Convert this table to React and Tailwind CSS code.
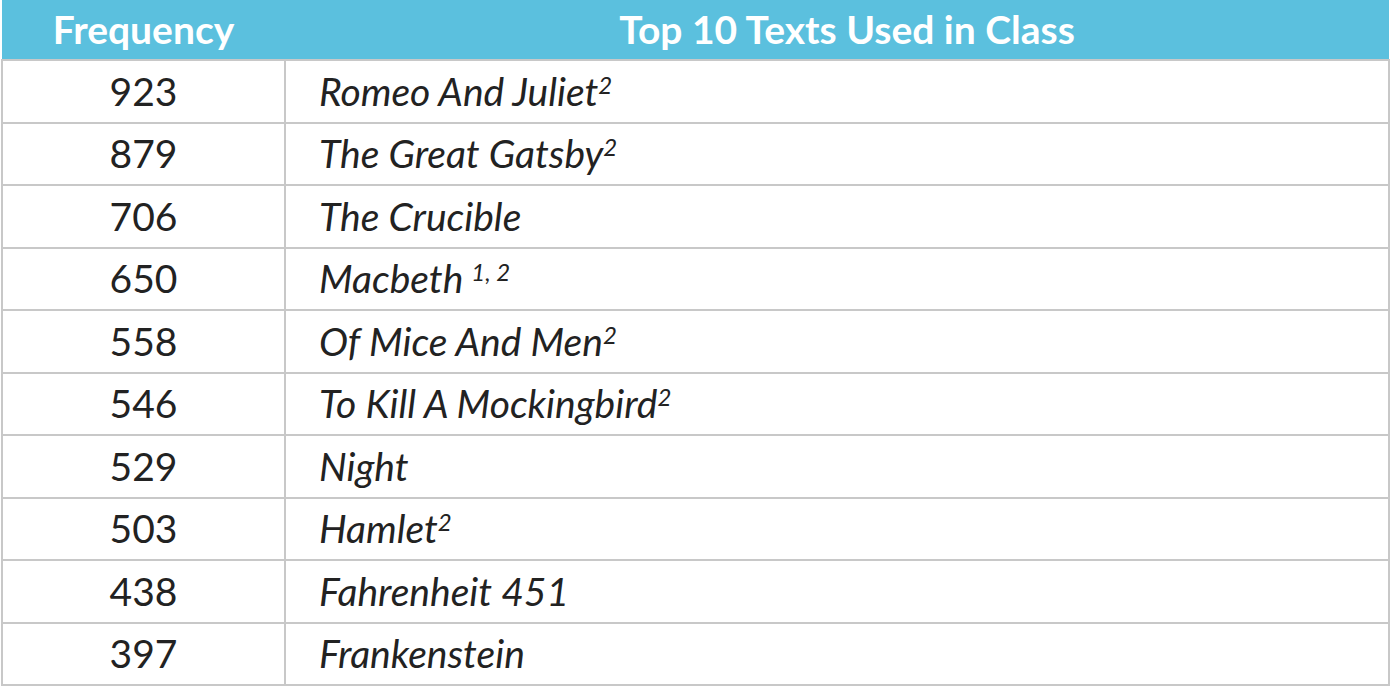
import React from "react";

const rows = [
  ["923", "Romeo And Juliet", "2", false],
  ["879", "The Great Gatsby", "2", false],
  ["706", "The Crucible", null, false],
  ["650", "Macbeth", "1, 2", true],
  ["558", "Of Mice And Men", "2", false],
  ["546", "To Kill A Mockingbird", "2", false],
  ["529", "Night", null, false],
  ["503", "Hamlet", "2", false],
  ["438", "Fahrenheit 451", null, false],
  ["397", "Frankenstein", null, false],
];

export default function App() {
  return (
    <div className="w-[1394px] h-[694px] bg-white" style={{ fontFamily: "Lato, 'Noto Sans', sans-serif" }}>
      <table className="w-[1389px] border-collapse ml-px table-fixed">
        <colgroup>
          <col className="w-[283px]" />
          <col />
        </colgroup>
        <thead>
          <tr className="bg-[#5bc0de] h-[60px]">
            <th className="text-white font-bold text-[39px] text-center p-0 border-0 leading-none">Frequency</th>
            <th className="text-white font-bold text-[39px] text-center p-0 border-0 pl-5 leading-none">Top 10 Texts Used in Class</th>
          </tr>
        </thead>
        <tbody>
          {rows.map(([n, t, sup, space]) => (
            <tr key={n} className="h-[62.5px]">
              <td className="text-[39px] text-[#222] text-center border-2 border-[#c8c8c8] p-0 leading-none">{n}</td>
              <td className="text-[39px] text-[#222] italic border-2 border-[#c8c8c8] p-0 pl-[33px] leading-none">
                {t}
                {sup && (
                  <sup className={`text-[24px] ${space ? "ml-2" : ""}`}>{sup}</sup>
                )}
              </td>
            </tr>
          ))}
        </tbody>
      </table>
    </div>
  );
}
